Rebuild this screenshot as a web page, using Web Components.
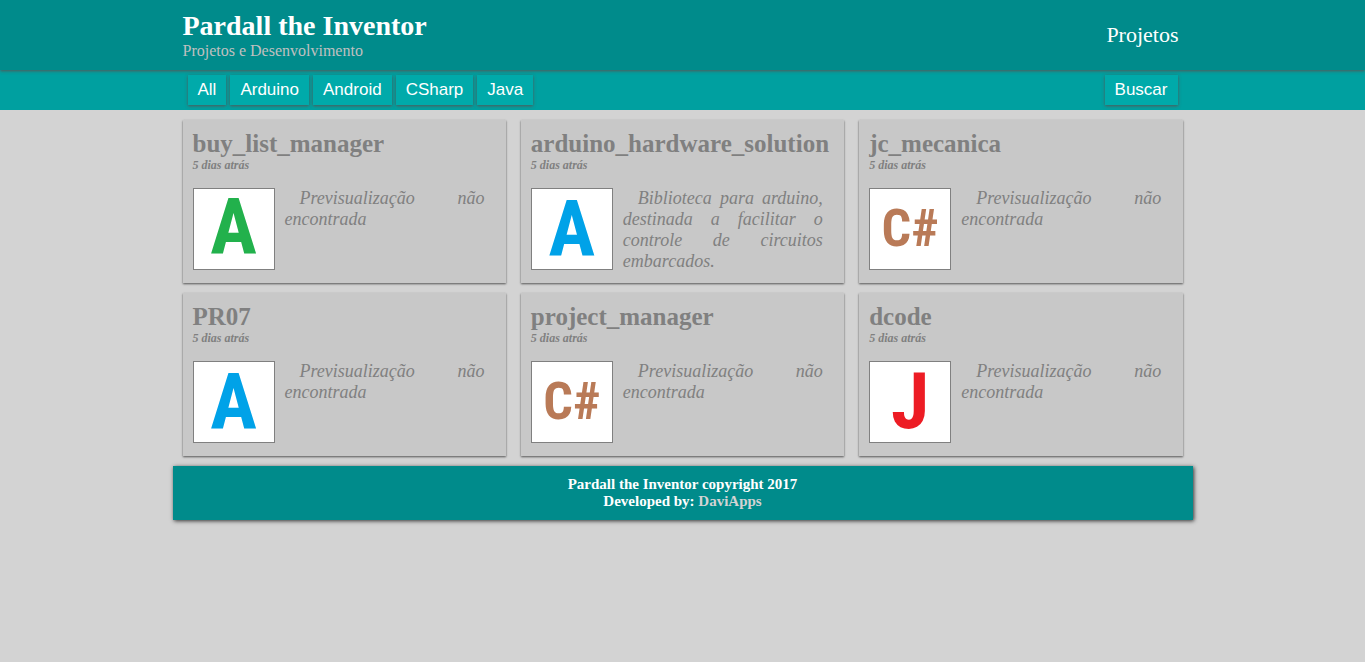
<!DOCTYPE html>
<html lang="pt-BR">
<head>
<meta charset="utf-8">
<meta name="viewport" content="width=device-width, initial-scale=1">
<title>Pardall the Inventor</title>
<style>
  body {
    margin: 0;
    min-height: 100vh;
    background: #d3d3d3;
    font-family: "Liberation Serif", "Times New Roman", serif;
  }
</style>
</head>
<body>
<site-header heading="Pardall the Inventor" tagline="Projetos e Desenvolvimento">
  <site-link href="#projetos">Projetos</site-link>
</site-header>
<filter-bar>
  <filter-button>All</filter-button>
  <filter-button>Arduino</filter-button>
  <filter-button>Android</filter-button>
  <filter-button>CSharp</filter-button>
  <filter-button>Java</filter-button>
  <filter-button slot="end">Buscar</filter-button>
</filter-bar>
<project-grid>
  <project-card heading="buy_list_manager" when="5 dias atrás"><language-badge slot="badge" kind="android">A</language-badge>Previsualização não encontrada</project-card>
  <project-card heading="arduino_hardware_solution" when="5 dias atrás"><language-badge slot="badge" kind="arduino">A</language-badge>Biblioteca para arduino, destinada a facilitar o controle de circuitos embarcados.</project-card>
  <project-card heading="jc_mecanica" when="5 dias atrás"><language-badge slot="badge" kind="csharp">C#</language-badge>Previsualização não encontrada</project-card>
  <project-card heading="PR07" when="5 dias atrás"><language-badge slot="badge" kind="arduino">A</language-badge>Previsualização não encontrada</project-card>
  <project-card heading="project_manager" when="5 dias atrás"><language-badge slot="badge" kind="csharp">C#</language-badge>Previsualização não encontrada</project-card>
  <project-card heading="dcode" when="5 dias atrás"><language-badge slot="badge" kind="java">J</language-badge>Previsualização não encontrada</project-card>
</project-grid>
<site-footer></site-footer>

<script>
class BaseElement extends HTMLElement {
  connectedCallback() {
    if (this.shadowRoot) return;
    const template = document.createElement('template');
    template.innerHTML = this.constructor.markup;
    const root = this.attachShadow({ mode: 'open' });
    root.append(template.content.cloneNode(true));
    for (const node of root.querySelectorAll('[data-text]')) {
      node.textContent = this.getAttribute(node.dataset.text);
    }
    for (const node of root.querySelectorAll('a[data-href]')) {
      node.href = this.getAttribute('href');
    }
  }
}

customElements.define('site-header', class extends BaseElement {
  static markup = `
    <style>
      :host { display: block; position: relative; background: #008b8b; box-shadow: 0 1px 3px #555; }
      header { display: flex; justify-content: space-between; align-items: center; box-sizing: border-box;
        max-width: 1020px; min-height: 70px; margin: 0 auto; padding: 0 10px; }
      h1 { margin: 0; font-size: 28px; line-height: 32px; color: #fff; }
      p { margin: 0; font-size: 16px; line-height: 18px; color: #c0c0c0; }
      nav { padding: 0 4px; }
    </style>
    <header>
      <div><h1 data-text="heading"></h1><p data-text="tagline"></p></div>
      <nav><slot></slot></nav>
    </header>`;
});

customElements.define('site-link', class extends BaseElement {
  static markup = `
    <style>
      :host { display: block; }
      a { display: block; color: #fff; font-size: 22px; line-height: 26px; text-decoration: none; }
    </style>
    <a data-href><slot></slot></a>`;
});

customElements.define('filter-bar', class extends BaseElement {
  static markup = `
    <style>
      :host { display: block; background: #00a0a0; }
      nav { display: flex; justify-content: space-between; box-sizing: border-box;
        max-width: 1020px; margin: 0 auto; padding: 5px 15px; }
      div { display: flex; flex-wrap: wrap; gap: 4px; }
    </style>
    <nav><div><slot></slot></div><div><slot name="end"></slot></div></nav>`;
});

customElements.define('filter-button', class extends BaseElement {
  static markup = `
    <style>
      :host { display: block; }
      button { display: block; height: 30px; border: 0; padding: 0 10px; background: #00aaaa; color: #fff;
        font: 17px/30px "Liberation Sans", Arial, sans-serif; box-shadow: 0 1px 3px #555; cursor: pointer; }
    </style>
    <button type="button"><slot></slot></button>`;
});

customElements.define('project-grid', class extends BaseElement {
  static markup = `
    <style>
      :host { display: grid; grid-template-columns: repeat(auto-fit, minmax(300px, 1fr)); gap: 10px 15px;
        box-sizing: border-box; max-width: 1020px; margin: 0 auto; padding: 10px; }
    </style>
    <slot></slot>`;
});

customElements.define('project-card', class extends BaseElement {
  static markup = `
    <style>
      :host { display: block; background: #c8c8c8; color: #808080; box-shadow: 0 1px 2px #555; }
      article { padding: 10px 10px 11px; }
      h2 { margin: 0; font-size: 25px; line-height: 28px; }
      time { display: block; font: italic bold 12px/14px "Liberation Serif", "Times New Roman", serif; }
      div { display: flex; align-items: flex-start; gap: 10px; margin-top: 16px; min-height: 84px; }
      p { flex: 1; max-width: 200px; margin: 0; font-size: 18px; line-height: 21px; font-style: italic;
        text-align: justify; text-indent: 15px; }
    </style>
    <article>
      <h2 data-text="heading"></h2>
      <time data-text="when"></time>
      <div><slot name="badge"></slot><p><slot></slot></p></div>
    </article>`;
});

customElements.define('language-badge', class extends BaseElement {
  static markup = `
    <style>
      :host { display: block; flex: none; width: 80px; height: 80px; border: 1px solid #808080; background: #fff; }
      span { display: block; text-align: center; font-family: "Roboto Condensed", "Arial Narrow", Roboto, sans-serif;
        font-weight: bold; font-size: 78px; line-height: 80px; }
      :host([kind="android"]) { color: #22b14c; }
      :host([kind="android"]) span { line-height: 76px; }
      :host([kind="arduino"]) { color: #00a2e8; }
      :host([kind="java"]) { color: #ed1c24; }
      :host([kind="csharp"]) { color: #b97a57; }
      :host([kind="csharp"]) span { font-size: 52px; }
    </style>
    <span><slot></slot></span>`;
});

customElements.define('site-footer', class extends BaseElement {
  static markup = `
    <style>
      :host { display: block; max-width: 1020px; margin: 0 auto; background: #008b8b; color: #fff;
        box-shadow: 1px 1px 4px #333; }
      footer { padding: 10px; text-align: center; font-size: 15px; line-height: 17px; font-weight: bold; }
      p { margin: 0; }
      a { color: #d3d3d3; text-decoration: none; }
    </style>
    <footer>
      <p>Pardall the Inventor copyright 2017</p>
      <p>Developed by: <a href="#daviapps">DaviApps</a></p>
    </footer>`;
});
</script>
</body>
</html>
